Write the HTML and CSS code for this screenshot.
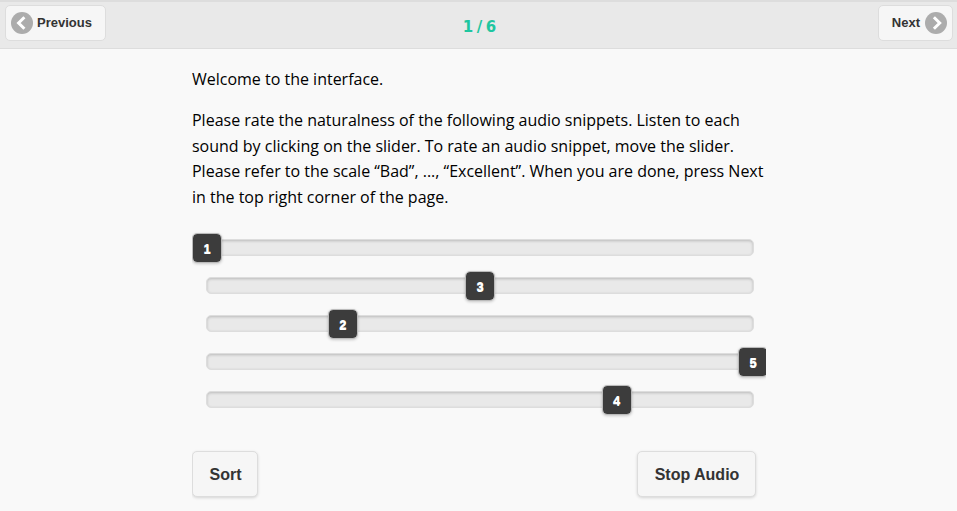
FILE: index.html
```html
<!DOCTYPE html>
<html lang="en">
<head>
<meta charset="utf-8">
<title>Listening test</title>
<link rel="stylesheet" href="styles.css">
</head>
<body>
<header class="header">
  <button class="nav prev"><svg class="icon" viewBox="0 0 22 22"><circle cx="11" cy="11" r="11"/><path d="M13.4 5.2 L7.6 11 L13.4 16.8"/></svg><span>Previous</span></button>
  <h1 class="title">1 / 6</h1>
  <button class="nav next"><span>Next</span><svg class="icon" viewBox="0 0 22 22"><circle cx="11" cy="11" r="11"/><path d="M8.9 5.2 L14.7 11 L8.9 16.8"/></svg></button>
</header>
<main class="content">
  <p>Welcome to the interface.</p>
  <p>Please rate the naturalness of the following audio snippets. Listen to each<br>sound by clicking on the slider. To rate an audio snippet, move the slider.<br>Please refer to the scale “Bad”, ..., “Excellent”. When you are done, press Next<br>in the top right corner of the page.</p>
  <div class="sliders">
    <div class="track"><span class="handle" style="left:0%">1</span></div>
    <div class="track"><span class="handle" style="left:50%">3</span></div>
    <div class="track"><span class="handle" style="left:24.9%">2</span></div>
    <div class="track"><span class="handle" style="left:100%">5</span></div>
    <div class="track"><span class="handle" style="left:75%">4</span></div>
  </div>
  <div class="actions">
    <button class="action sort">Sort</button>
    <button class="action stop">Stop Audio</button>
  </div>
</main>
</body>
</html>
```
FILE: styles.css
```css
* { box-sizing: border-box; }
body {
  margin: 0;
  height: 511px;
  overflow: hidden;
  background: #f9f9f9;
  color: #000;
  font-family: "Open Sans", sans-serif;
  font-size: 16px;
}
button {
  margin: 0;
  border: 1px solid #ddd;
  background: #f6f6f6;
  color: #333;
  font-family: "Liberation Sans", Arial, sans-serif;
  font-weight: bold;
  text-shadow: 0 1px 0 #f3f3f3;
}
.header {
  display: grid;
  grid-template-columns: 1fr auto 1fr;
  align-items: start;
  height: 49px;
  padding: 3px 4px 0 5px;
  background: #e9e9e9;
  border-top: 2px solid #ddd;
  border-bottom: 1px solid #ddd;
}
.nav {
  display: flex;
  align-items: center;
  height: 36px;
  padding: 0 5px;
  border-radius: 5px;
  font-size: 13px;
  line-height: 16px;
}
.prev { width: 101px; justify-self: start; gap: 4px; }
.next { width: 75px; justify-self: end; justify-content: flex-end; gap: 5px; }
.icon { width: 22px; height: 22px; flex: none; }
.icon circle { fill: #acacac; }
.icon path { fill: none; stroke: #fff; stroke-width: 3; }
.title {
  margin: 11px 0 0;
  padding-left: 1px;
  color: #1fc6a0;
  font: bold 15px/22px "DejaVu Sans", Verdana, sans-serif;
  word-spacing: -1.7px;
}
.content { width: 574px; margin-left: 192px; padding-top: 18px; overflow: hidden; }
.content p { margin: 0 0 15px; line-height: 25.8px; white-space: nowrap; letter-spacing: -0.005px; }
.sliders { display: grid; gap: 21px; padding: 13px 12px 0 14px; }
.track {
  position: relative;
  height: 17px;
  background: #e9e9e9;
  border: 1px solid #ddd;
  border-radius: 5px;
  box-shadow: inset 0 1px 3px rgba(0, 0, 0, .2);
}
.handle {
  position: absolute;
  top: -7px;
  width: 30px;
  height: 30px;
  margin-left: -15px;
  padding-top: 1px;
  border: 1px solid #bbb;
  border-radius: 5px;
  background: #3c3c3c;
  background-clip: padding-box;
  box-shadow: 0 1px 3px rgba(0, 0, 0, .2);
  color: #fff;
  font: bold 13px/28px "Liberation Sans", Arial, sans-serif;
  text-align: center;
  text-shadow: 0 1px 0 #fff;
}
.actions { display: flex; justify-content: space-between; padding: 43px 10px 8px 0; }
.action {
  height: 46px;
  padding: 2px 0 0 1px;
  border-radius: 5px;
  box-shadow: 0 1px 3px rgba(0, 0, 0, .15);
  font-size: 16px;
}
.sort { width: 66px; }
.stop { width: 119px; }
```
